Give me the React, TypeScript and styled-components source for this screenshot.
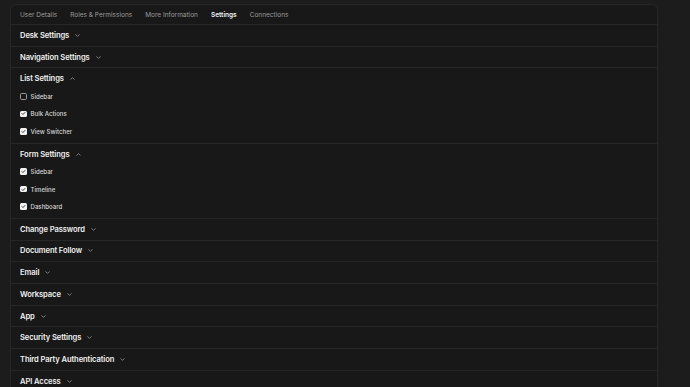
import React from 'react';
import styled, { createGlobalStyle } from 'styled-components';

const GlobalStyle = createGlobalStyle`
  html, body {
    margin: 0;
    padding: 0;
    background: #1c1c1c;
    font-family: Inter, "Noto Sans", sans-serif;
    overflow: hidden;
  }
`;

const Page = styled.div`
  padding: 4px 32px 0 10px;
  height: 387px;
  box-sizing: border-box;
`;

const Card = styled.div`
  background: #181818;
  border: 1px solid #262626;
  border-bottom: none;
  border-radius: 6px 6px 0 0;
  height: 100%;
`;

const TabBar = styled.div`
  display: flex;
  align-items: center;
  gap: 13px;
  height: 19px;
  padding: 0 9px;
  border-bottom: 1px solid #262626;
`;

const Tab = styled.div<{ $active?: boolean }>`
  font-size: 6.5px;
  font-weight: ${(p) => (p.$active ? 600 : 400)};
  color: ${(p) => (p.$active ? '#f2f2f2' : '#9c9c9c')};
  white-space: nowrap;
`;

const Section = styled.div`
  border-bottom: 1px solid #262626;
`;

const SectionHeader = styled.div`
  display: flex;
  align-items: center;
  gap: 5px;
  height: 20.7px;
  padding: 0 9px;
`;

const SectionTitle = styled.div`
  font-size: 7.6px;
  font-weight: 600;
  letter-spacing: -0.1px;
  color: #f0f0f0;
  white-space: nowrap;
`;

const Chevron = styled.svg`
  width: 7px;
  height: 7px;
  flex: none;
`;

const Options = styled.div`
  margin-top: -1.5px;
  padding: 0 9px 2.6px;
`;

const Option = styled.div`
  display: flex;
  align-items: center;
  gap: 4px;
  height: 17.5px;
`;

const Box = styled.div<{ $checked?: boolean }>`
  width: 6.5px;
  height: 6.5px;
  border-radius: 1.5px;
  box-sizing: border-box;
  display: flex;
  align-items: center;
  justify-content: center;
  background: ${(p) => (p.$checked ? '#f2f2f2' : 'transparent')};
  border: ${(p) => (p.$checked ? 'none' : '1px solid #9a9a9a')};
`;

const OptionLabel = styled.div`
  font-size: 6.1px;
  font-weight: 500;
  color: #d6d6d6;
  white-space: nowrap;
`;

const ChevronIcon = ({ up }: { up?: boolean }) => (
  <Chevron viewBox="0 0 24 24" fill="none" stroke="#a8a8a8" strokeWidth={2.4} strokeLinecap="round" strokeLinejoin="round">
    <path d={up ? 'M6 15l6-6 6 6' : 'M6 9l6 6 6-6'} />
  </Chevron>
);

const CheckBox = ({ checked }: { checked?: boolean }) => (
  <Box $checked={checked}>
    {checked && (
      <svg width="5" height="5" viewBox="0 0 24 24" fill="none" stroke="#181818" strokeWidth={4} strokeLinecap="round" strokeLinejoin="round">
        <path d="M5 12.5l4.5 4.5L19 7" />
      </svg>
    )}
  </Box>
);

type SectionData = {
  title: string;
  options?: { label: string; checked: boolean }[];
};

const tabs = ['User Details', 'Roles & Permissions', 'More Information', 'Settings', 'Connections'];

const sections: SectionData[] = [
  { title: 'Desk Settings' },
  { title: 'Navigation Settings' },
  {
    title: 'List Settings',
    options: [
      { label: 'Sidebar', checked: false },
      { label: 'Bulk Actions', checked: true },
      { label: 'View Switcher', checked: true },
    ],
  },
  {
    title: 'Form Settings',
    options: [
      { label: 'Sidebar', checked: true },
      { label: 'Timeline', checked: true },
      { label: 'Dashboard', checked: true },
    ],
  },
  { title: 'Change Password' },
  { title: 'Document Follow' },
  { title: 'Email' },
  { title: 'Workspace' },
  { title: 'App' },
  { title: 'Security Settings' },
  { title: 'Third Party Authentication' },
  { title: 'API Access' },
];

const App: React.FC = () => {
  return (
    <>
      <GlobalStyle />
      <Page>
        <Card>
          <TabBar>
            {tabs.map((t) => (
              <Tab key={t} $active={t === 'Settings'}>
                {t}
              </Tab>
            ))}
          </TabBar>

          {sections.map((s) => (
            <Section key={s.title}>
              <SectionHeader>
                <SectionTitle>{s.title}</SectionTitle>
                <ChevronIcon up={!!s.options} />
              </SectionHeader>
              {s.options && (
                <Options>
                  {s.options.map((o) => (
                    <Option key={o.label}>
                      <CheckBox checked={o.checked} />
                      <OptionLabel>{o.label}</OptionLabel>
                    </Option>
                  ))}
                </Options>
              )}
            </Section>
          ))}
        </Card>
      </Page>
    </>
  );
};

export default App;
